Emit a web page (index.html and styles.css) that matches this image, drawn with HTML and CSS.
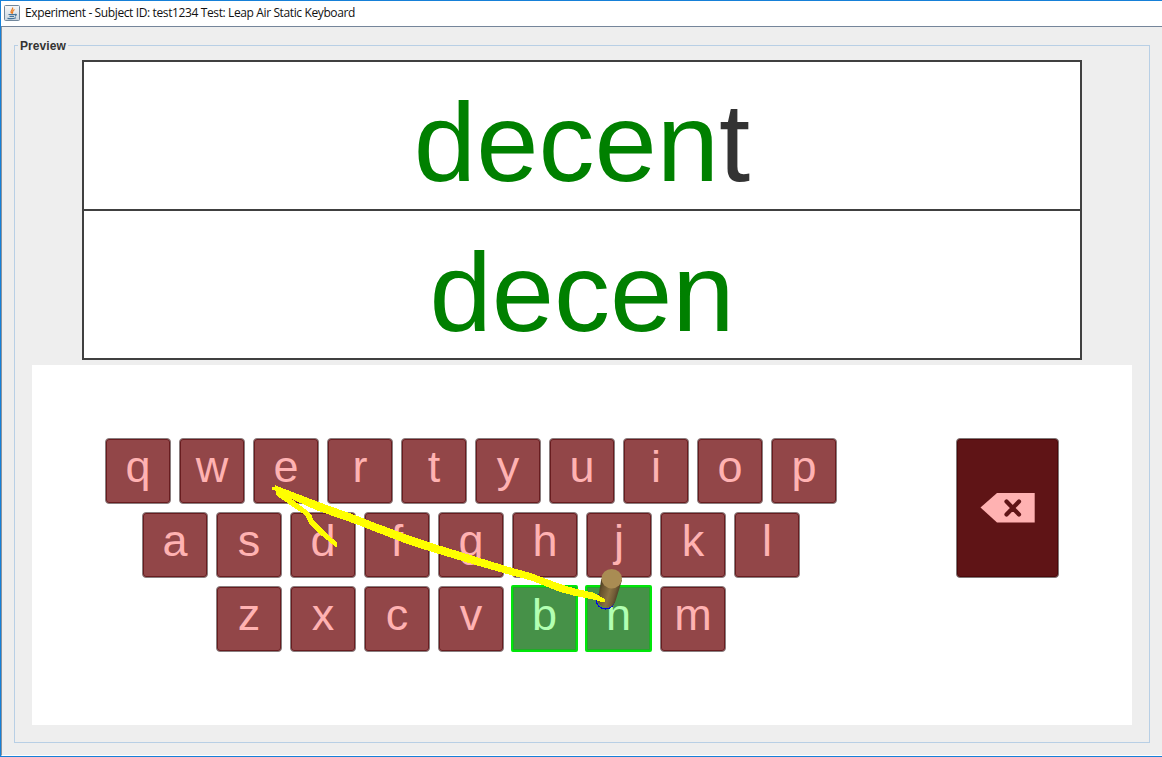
FILE: index.html
```html
<!DOCTYPE html>
<html lang="en">
<head>
<meta charset="utf-8">
<title>Experiment</title>
<link rel="stylesheet" href="styles.css">
</head>
<body>
<div class="window">
  <header class="titlebar">
    <svg class="app-icon" width="16" height="16" viewBox="0 0 16 16">
      <defs><linearGradient id="tile" x2="0" y2="1"><stop offset="0" stop-color="#f8f8f8"/><stop offset="1" stop-color="#cbd6df"/></linearGradient></defs>
      <rect x=".5" y=".5" width="15" height="15" rx="1" fill="url(#tile)" stroke="#71879c"/>
      <path d="M8.500 2.500C9.500 5 5.500 5.500 7.500 8.500M10.500 4.500C7.500 5.800 9.500 7 8 8.700" fill="none" stroke="#ec7d22" stroke-width="1.300"/>
      <path d="M4.500 9.500H10.500M5.500 11.300H10M3.500 13.300Q8 14.300 12 12.800M10.500 9.500Q14 8.700 11 11.200" fill="none" stroke="#44749a" stroke-width="1.200"/>
    </svg>
    <span class="title">Experiment - Subject ID: test1234 Test: Leap Air Static Keyboard</span>
  </header>
  <main class="content">
    <section class="preview">
      <h2 class="legend">Preview</h2>
      <div class="words">
        <div class="word"><span class="done">decen</span>t</div>
        <div class="word typed"><span class="done">decen</span></div>
      </div>
      <div class="board">
        <div class="rows">
          <div class="row"><span class="key">q</span><span class="key">w</span><span class="key">e</span><span class="key">r</span><span class="key">t</span><span class="key">y</span><span class="key">u</span><span class="key">i</span><span class="key">o</span><span class="key">p</span></div>
          <div class="row home"><span class="key">a</span><span class="key">s</span><span class="key">d</span><span class="key">f</span><span class="key">g</span><span class="key">h</span><span class="key">j</span><span class="key">k</span><span class="key">l</span></div>
          <div class="row bottom"><span class="key">z</span><span class="key">x</span><span class="key">c</span><span class="key">v</span><span class="key active">b</span><span class="key active">n</span><span class="key">m</span></div>
        </div>
        <div class="backspace">
          <svg width="56" height="32" viewBox="0 0 56 32">
            <path d="M.500 15.500L17 1H54.700V30.500H17Z" fill="#ffb2b2"/>
            <path d="M26.500 9.500L39 22.500M39 9.500L26.500 22.500" stroke="#5f1416" stroke-width="4.200" stroke-linecap="round"/>
          </svg>
        </div>
        <svg class="overlay" viewBox="32 365 1100 360">
          <defs>
            <linearGradient id="finger" gradientUnits="userSpaceOnUse" x1="598" y1="588" x2="619" y2="594">
              <stop offset="0" stop-color="#443721"/><stop offset=".2" stop-color="#69542f"/><stop offset=".55" stop-color="#8b7344"/><stop offset=".8" stop-color="#715b37"/><stop offset="1" stop-color="#493a22"/>
            </linearGradient>
          </defs>
          <ellipse cx="605.500" cy="600.500" rx="9" ry="8.500" fill="none" stroke="#0000e8" stroke-width="1.200" shape-rendering="crispEdges"/>
          <path d="M601.300 579L597.500 602Q602 608.500 609 607.500Q614 606 615.500 601L622 580Z" fill="url(#finger)"/>
          <ellipse cx="611.700" cy="578.700" rx="10.300" ry="9.700" fill="#a98c53"/>
          <polygon class="trail" transform="translate(260 475) scale(.33333)" points="37,37 46,37 46,31 100,52 170,79 290,122 340,142 450,183 520,206 640,243 740,274 815,295 900,327 950,342 1000,353 1035,372 1035,382 1028,382 1010,376 950,364 900,351 815,317 740,297 640,268 520,232 450,210 340,168 290,148 170,106 95,72 135,102 155,122 160,135 190,165 231,203 231,218 215,206 180,178 150,150 135,120 115,107 50,62 46,46 37,46"/>
        </svg>
      </div>
    </section>
  </main>
</div>
</body>
</html>
```
FILE: styles.css
```css
* { box-sizing: border-box; }
body { margin: 0; background: #eee; font-family: "Liberation Sans", Arial, sans-serif; }
.window {
  width: 1162px;
  height: 757px;
  display: flex;
  flex-direction: column;
  border: 1px solid #1680d8;
  border-right: 0;
  overflow: hidden;
}
.titlebar {
  height: 26px;
  flex: none;
  display: flex;
  align-items: center;
  gap: 5px;
  padding: 0 3px 1px;
  background: #fff;
  border-bottom: 1px solid #75859a;
}
.app-icon { display: block; }
.title {
  font: 12px/16px "Open Sans", "Noto Sans", sans-serif;
  letter-spacing: -0.38px;
  color: #111;
  white-space: nowrap;
}
.content {
  flex: 1;
  padding: 18px 12px 12px;
  background: #eee;
  border-left: 1px solid #8b939d;
  border-bottom: 1px solid #fff;
}
.preview {
  height: 698px;
  border: 1px solid #b8cfe5;
  display: flex;
  flex-direction: column;
}
.legend {
  align-self: flex-start;
  flex: none;
  height: 14px;
  margin: -7px 0 7px 3px;
  padding: 0 2px;
  background: #eee;
  color: #333;
  font-size: 12px;
  line-height: 14px;
  letter-spacing: 0.08px;
}
.words {
  width: 1000px;
  height: 300px;
  flex: none;
  margin-left: 67px;
  border: 2px solid #404040;
  background: #fff;
}
.word {
  height: 147px;
  color: #333;
  font-size: 112px;
  line-height: 161px;
  text-align: center;
}
.typed {
  height: 149px;
  border-top: 2px solid #404040;
  line-height: 163px;
}
.done { color: #008000; }
.board {
  position: relative;
  width: 1100px;
  height: 360px;
  flex: none;
  display: flex;
  align-items: flex-start;
  justify-content: space-between;
  margin: 5px 0 0 17px;
  padding: 73px 73px 0;
  background: #fff;
}
.rows { display: flex; flex-direction: column; gap: 8px; }
.row { display: flex; gap: 8px; height: 66px; }
.home { padding-left: 37px; }
.bottom { padding-left: 111px; }
.key {
  width: 66px;
  height: 66px;
  border: 1px solid #8a7f80;
  border-radius: 4px;
  box-shadow: inset 0 0 0 1px #681c1f;
  background: #924648;
  color: #ffb2b2;
  font-size: 45px;
  line-height: 55px;
  text-align: center;
}
.active {
  width: 67px;
  height: 67px;
  margin: -1px 0 0 -1px;
  border: 2px solid #00e60a;
  border-radius: 2px;
  box-shadow: inset 0 0 0 1px #21a928;
  background: #469148;
  color: #b2ffb2;
}
.backspace {
  width: 103px;
  height: 140px;
  display: flex;
  align-items: center;
  justify-content: center;
  border: 1px solid #807777;
  border-radius: 4px;
  box-shadow: inset 0 0 0 1px #4c080a;
  background: #5f1416;
}
.overlay { position: absolute; inset: 0; width: 1100px; height: 360px; }
.trail { fill: #ff0; shape-rendering: crispEdges; }
```
